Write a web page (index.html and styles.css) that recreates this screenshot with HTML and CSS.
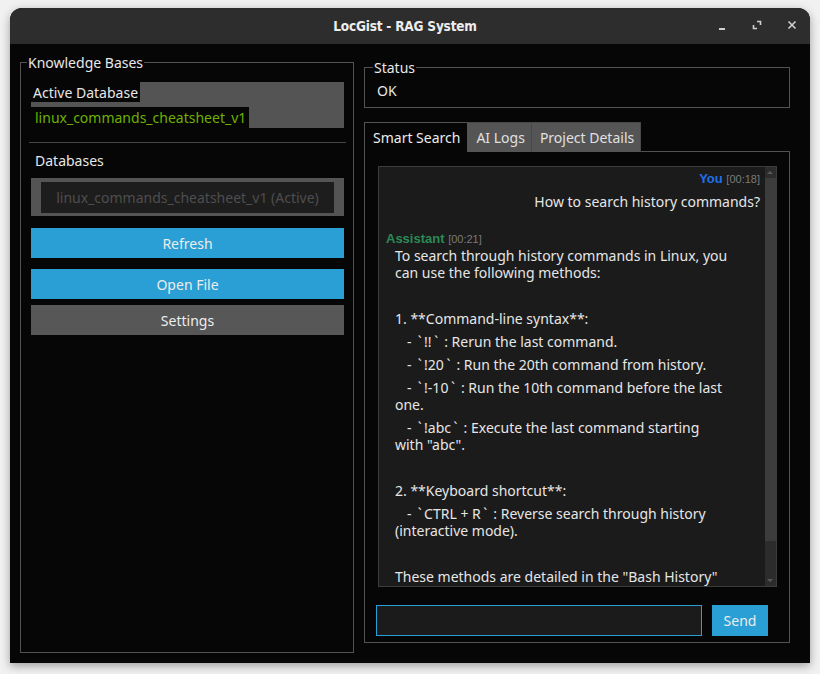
FILE: index.html
```html
<!DOCTYPE html>
<html>
<head>
<meta charset="utf-8">
<title>LocGist - RAG System</title>
<link rel="stylesheet" href="styles.css">
</head>
<body>
<div class="window">
  <div class="titlebar">
    <div class="title">LocGist - RAG System</div>
    <div class="controls">
      <svg class="ctl" width="12" height="12" viewBox="0 0 12 12"><rect x="3" y="9" width="6" height="2" fill="#d0d0d0"/></svg>
      <svg class="ctl" width="12" height="12" viewBox="0 0 12 12"><path d="M6 2.5h3.5V6M6 9.5H2.5V6" fill="none" stroke="#d0d0d0" stroke-width="1.6"/></svg>
      <svg class="ctl" width="12" height="12" viewBox="0 0 12 12"><path d="M2.5 2.5l7 7M9.5 2.5l-7 7" stroke="#d0d0d0" stroke-width="1.6"/></svg>
    </div>
  </div>
  <div class="main">
    <fieldset class="group left">
      <legend>Knowledge Bases</legend>
      <div class="active-box">
        <span class="active-label">Active Database</span>
        <span class="active-name">linux_commands_cheatsheet_v1</span>
      </div>
      <div class="sep"></div>
      <div class="db-title">Databases</div>
      <div class="db-list">
        <div class="db-item">linux_commands_cheatsheet_v1 (Active)</div>
      </div>
      <button class="btn blue refresh">Refresh</button>
      <button class="btn blue open">Open File</button>
      <button class="btn grey settings">Settings</button>
    </fieldset>
    <div class="right">
      <fieldset class="group status">
        <legend>Status</legend>
        <div class="status-text">OK</div>
      </fieldset>
      <div class="tabs">
        <div class="tab active">Smart Search</div>
        <div class="tab">AI Logs</div>
        <div class="tab">Project Details</div>
      </div>
      <div class="pane">
        <div class="chat">
          <div class="chat-content">
            <div class="msg user">
              <div class="who"><span class="name you">You</span> <span class="time">[00:18]</span></div>
              <p>How to search history commands?</p>
            </div>
            <div class="msg bot">
              <div class="who"><span class="name asst">Assistant</span> <span class="time">[00:21]</span></div>
              <div class="body">
                <p>To search through history commands in Linux, you can use the following methods:</p>
                <p class="blank"></p>
                <p>1. **Command-line syntax**:</p>
                <p class="item">- <span class="bt">`</span>!!<span class="bt">`</span> : Rerun the last command.</p>
                <p class="item">- <span class="bt">`</span>!20<span class="bt">`</span> : Run the 20th command from history.</p>
                <p class="item">- <span class="bt">`</span>!-10<span class="bt">`</span> : Run the 10th command before the last one.</p>
                <p class="item">- <span class="bt">`</span>!abc<span class="bt">`</span> : Execute the last command starting with "abc".</p>
                <p class="blank"></p>
                <p>2. **Keyboard shortcut**:</p>
                <p class="item">- <span class="bt">`</span>CTRL + R<span class="bt">`</span> : Reverse search through history (interactive mode).</p>
                <p class="blank"></p>
                <p>These methods are detailed in the "Bash History" section of the cheatsheet.</p>
              </div>
            </div>
          </div>
          <div class="scrollbar">
            <div class="arrow up"></div>
            <div class="track"><div class="handle"></div></div>
            <div class="arrow down"></div>
          </div>
        </div>
        <div class="input-row">
          <input class="query" type="text">
          <button class="btn blue send">Send</button>
        </div>
      </div>
    </div>
  </div>
</div>
</body>
</html>
```
FILE: styles.css
```css
html, body {
  margin: 0;
  padding: 0;
}
body {
  background: #f1f1f1;
  width: 820px;
  height: 674px;
  overflow: hidden;
  font-family: "Noto Sans", "DejaVu Sans", sans-serif;
  font-size: 14px;
  color: #e6e6e6;
}
.window {
  margin: 8px 0 0 10px;
  width: 800px;
  height: 655px;
  border-radius: 12px 12px 0 0;
  background: #060606;
  box-shadow: 0 3px 10px rgba(0,0,0,0.35);
  display: flex;
  flex-direction: column;
  overflow: hidden;
}
.titlebar {
  height: 36px;
  flex: none;
  background: #2d2d2d;
  display: flex;
  align-items: center;
  justify-content: center;
  position: relative;
}
.title {
  font-family: "DejaVu Sans Condensed", "Roboto", sans-serif;
  font-weight: bold;
  font-size: 13.5px;
  color: #ededed;
  letter-spacing: -0.2px;
  margin-left: -10px;
}
.controls {
  position: absolute;
  right: 12px;
  top: 11px;
  display: flex;
  gap: 23px;
}
.ctl { display: block; }

.main {
  flex: 1;
  display: flex;
  gap: 10px;
  padding: 10px 20px 10px 10px;
  min-height: 0;
}
.group {
  margin: 0;
  border: 1px solid #525252;
  min-width: 0;
}
.group legend {
  padding: 0 1px;
  margin-left: -4px;
  line-height: 17px;
  color: #e8e8e8;
}
.left {
  width: 334px;
  box-sizing: border-box;
  padding: 11px 9px 0 10px;
  display: flex;
  flex-direction: column;
}
.active-box {
  background: #545454;
  height: 46px;
  display: flex;
  flex-direction: column;
  align-items: flex-start;
  justify-content: space-between;
}
.active-label {
  background: #060606;
  height: 20px;
  line-height: 21px;
  padding: 0 2px;
}
.active-name {
  background: #060606;
  color: #6fb000;
  height: 21px;
  line-height: 21px;
  padding: 0 3px 0 4px;
}
.sep {
  height: 1px;
  background: #474747;
  margin: 14px -2px 0;
}
.db-title {
  margin-top: 9px;
  padding-left: 4px;
  line-height: 17px;
}
.db-list {
  margin-top: 9px;
  background: #545454;
  padding: 4px 10px 3px;
}
.db-item {
  background: #1d1d1d;
  height: 31px;
  line-height: 31px;
  text-align: center;
  color: #4e4e4e;
}
.btn {
  border: none;
  font-family: "Noto Sans", "DejaVu Sans", sans-serif;
  font-size: 14px;
  color: #ececec;
  height: 30px;
  padding: 0;
  display: block;
}
.blue { background: #2a9fd6; }
.grey { background: #575757; }
.left .btn { width: 100%; }
.refresh { margin-top: 12px; }
.open { margin-top: 11px; }
.settings { margin-top: 6px; }

.right {
  flex: 1;
  display: flex;
  flex-direction: column;
  padding-top: 5px;
  padding-bottom: 10px;
  min-width: 0;
}
.status {
  padding: 6px 12px 8px;
}
.status-text { line-height: 17px; }
.tabs {
  margin-top: 14px;
  display: flex;
  height: 30px;
  position: relative;
  z-index: 1;
}
.tab {
  padding: 0 6px 0 8px;
  line-height: 29px;
  background: #555;
  border: 1px solid #484848;
  border-bottom: none;
  color: #e0e0e0;
}
.tab.active {
  background: #060606;
  border-color: #525252;
  color: #ececec;
  line-height: 30px;
  padding-right: 7px;
}
.tab + .tab { border-left: none; }
.pane {
  flex: 1;
  border: 1px solid #525252;
  margin-top: -1px;
  padding: 14px 12px 6px 13px;
  display: flex;
  flex-direction: column;
  min-height: 0;
}
.chat {
  height: 421px;
  box-sizing: border-box;
  border: 1px solid #3c3c3c;
  background: #1b1b1b;
  display: flex;
  overflow: hidden;
}
.chat-content {
  flex: 1;
  overflow: hidden;
  padding: 3px 5px 0 7px;
  min-width: 0;
}
.msg p {
  margin: 0 0 6px;
  line-height: 17px;
}
.msg p.blank { height: 17px; }
.msg p.item { text-indent: 12px; }
.bt { margin: 0 2.5px; }
.who {
  height: 17px;
  line-height: 17px;
  margin-bottom: 6px;
  font-family: "Liberation Sans", Arial, sans-serif;
  font-size: 13px;
}
.user { text-align: right; }
.user p { margin-bottom: 0; }
.bot { margin-top: 20px; }
.bot .who { margin-bottom: 0; }
.bot .body { padding-left: 9px; width: 333px; }
.name { font-weight: bold; font-size: 13px; }
.you { color: #1f6fea; }
.asst { color: #2a8a55; }
.time { font-size: 11px; color: #7a7a7a; }

.scrollbar {
  width: 11px;
  flex: none;
  background: #2c2c2c;
  display: flex;
  flex-direction: column;
}
.arrow {
  height: 11px;
  position: relative;
}
.arrow::after {
  content: "";
  position: absolute;
  left: 2px;
  border-left: 3.5px solid transparent;
  border-right: 3.5px solid transparent;
}
.arrow.up::after { top: 4px; border-bottom: 3px solid #5a5a5a; }
.arrow.down::after { top: 4px; border-top: 3px solid #5a5a5a; }
.track { flex: 1; }
.handle {
  height: 363px;
  background: #3c3c3c;
}

.input-row {
  margin: 18px 9px 0 -2px;
  display: flex;
  gap: 10px;
}
.query {
  flex: 1;
  height: 31px;
  box-sizing: border-box;
  border: 1px solid #2a9fd6;
  background: #1b1b1b;
  color: #e6e6e6;
  outline: none;
  margin: 0;
  padding: 0 6px;
}
.send {
  width: 56px;
  height: 31px;
}
```
